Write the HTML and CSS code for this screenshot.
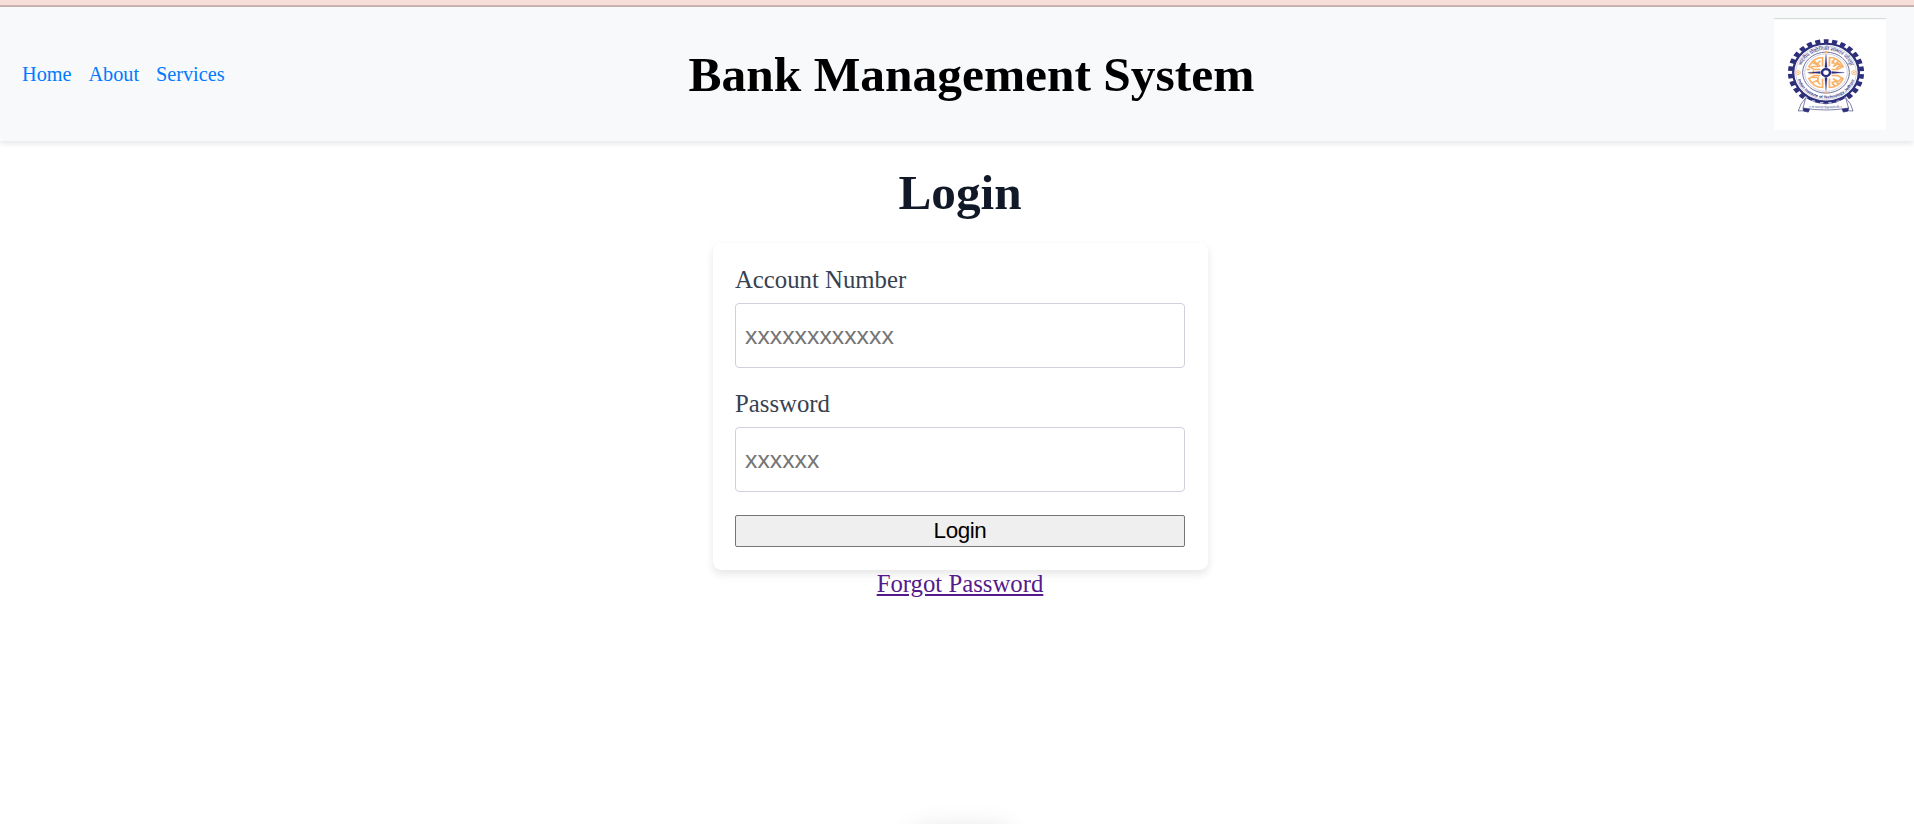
FILE: index.html
```html
<!DOCTYPE html>
<html lang="en">
<head>
<meta charset="utf-8">
<title>Bank Management System</title>
<link rel="stylesheet" href="styles.css">
</head>
<body>
<div class="top-strip"></div>
<header class="header">
  <nav class="nav"><a href="#">Home</a><a href="#">About</a><a href="#">Services</a></nav>
  <h1 class="title">Bank Management System</h1>
  <svg class="logo" viewBox="0 0 112 112" aria-label="Institute emblem">
    <rect width="112" height="112" fill="#fff"/>
    <rect width="112" height="1.2" fill="#d8dadc"/>
    <g transform="translate(52 54.6) scale(1.14 1)">
      <circle r="31.3" fill="none" stroke="#2d2f7b" stroke-width="4.2" stroke-dasharray="4.5 3.064" stroke-dashoffset="2.25" transform="rotate(-90)"/>
      <circle r="28.8" fill="#fff" stroke="#2d2f7b" stroke-width="2"/>
      <circle r="26.6" fill="none" stroke="#a9aacb" stroke-width=".5"/>
      <circle r="20.5" fill="none" stroke="#55578f" stroke-width=".8"/>
      <circle r="18.7" fill="none" stroke="#b5b6d2" stroke-width=".6"/>
      <g fill="none" stroke="#f9b269" stroke-width="1.5">
        <path d="M3 -6V-15Q11 -15 15 -6L10 -3L5 -3M5 -12L8 -8L11 -12M6 -6L11 -9L14 -5M8 -14L5 -9M9 -4L12 -7"/>
        <path d="M-3 -6V-15Q-11 -15 -15 -6L-10 -3H-5M-5 -12L-8 -8L-12 -10M-13 -6H-7V-10M-11 -12L-5 -6M-14 -3H-17"/>
        <path d="M3 6V15Q11 15 15 6L10 3H5M5 12L8 8L11 12M6 6L11 9L14 5M8 14L5 9"/>
        <path d="M-3 6V15Q-11 15 -15 6L-10 3H-5M-5 12L-8 8L-12 10M-13 5H-7V10M-15 1H-11V-2"/>
      </g>
      <path d="M-1 -5L0 -18L1 -5ZM-1 5L0 18L1 5ZM-5 -1L-16 0L-5 1ZM5 -1L16 0L5 1Z" fill="#2d2f7b" stroke="#2d2f7b" stroke-width=".3"/>
      <circle r="3.5" fill="#fff" stroke="#2d2f7b" stroke-width="2.2"/>
      <g fill="#fff" stroke="#f9b269" stroke-width=".8"><circle cx="-24.5" r="2"/><circle cx="24.5" r="2"/></g>
      <g fill="#f9b269"><circle cx="-24.5" r=".8"/><circle cx="24.5" r=".8"/><circle cy="-20.3" r="1.2"/><circle cy="20" r="1.2"/></g>
      <path id="upper" d="M-22.3 0A22.3 22.3 0 0 1 22.3 0" fill="none"/>
      <path id="lower" d="M-25.7 0A25.7 25.7 0 0 0 25.7 0" fill="none"/>
      <text class="seal-hi"><textPath href="#upper" startOffset="50%" text-anchor="middle" textLength="56">भारतीय प्रौद्योगिकी संस्थान जोधपुर</textPath></text>
      <text class="seal-en"><textPath href="#lower" startOffset="50%" text-anchor="middle" textLength="66">Indian Institute of Technology Jodhpur</textPath></text>
    </g>
    <g stroke="#2d2f7b" stroke-width=".6" stroke-linejoin="round">
      <path d="M31.7 80L27 86L24.3 93Q29 92 34.3 94L36 90M71.7 80L76.5 86L79 93Q74 92 69.5 94L67.5 90" fill="#fff"/>
      <path d="M29 90L36 89L34.3 94L29.5 93ZM74.5 90L67.5 89L69.5 94L74 93Z" fill="#2d2f7b"/>
      <path d="M31.7 79.7Q52 92 71.7 79.7L74.5 90Q52 94 29 90Z" fill="#fff"/>
    </g>
    <path id="motto" d="M35 89.5Q52 91.5 69 89.5" fill="none"/>
    <text class="seal-motto"><textPath href="#motto" textLength="33">॥ त्वं ज्ञानमयो विज्ञानमयोऽसि ॥</textPath></text>
  </svg>
</header>
<main class="main">
  <h2 class="heading">Login</h2>
  <form class="card">
    <label class="label" for="account">Account Number</label>
    <input class="input" id="account" type="text" placeholder="xxxxxxxxxxxx">
    <label class="label" for="password">Password</label>
    <input class="input" id="password" type="password" placeholder="xxxxxx">
    <button class="button" type="button">Login</button>
  </form>
  <a class="forgot" href="#">Forgot Password</a>
</main>
<div class="bottom-shade"></div>
</body>
</html>
```

FILE: styles.css
```css
* { box-sizing: border-box; }
body {
  margin: 0;
  height: 824px;
  overflow: hidden;
  position: relative;
  background: #fff;
  font-family: "Liberation Serif", "Times New Roman", serif;
}
.top-strip {
  height: 7px;
  background: #f5dfd8;
  border-bottom: 2px solid #c9b3ac;
}
.header {
  display: grid;
  grid-template-columns: 1fr auto 1fr;
  align-items: center;
  height: 134px;
  padding: 0 28px 0 22px;
  background: #f8f9fb;
  box-shadow: 0 2.8px 5.6px rgba(0, 0, 0, .1);
}
.nav { display: flex; gap: 16.8px; font-size: 20.3px; }
.nav a { color: #007bff; text-decoration: none; }
.title { margin: 2px 0 0 35px; font-size: 49.45px; line-height: 56px; color: #000; }
.logo { display: block; width: 112px; height: 112px; justify-self: end; }
.seal-hi { font: 5px "Noto Sans", sans-serif; fill: #2d2f7b; }
.seal-en { font: 700 3.7px "Liberation Sans", sans-serif; fill: #2d2f7b; }
.seal-motto { font: 2.8px "Noto Sans", sans-serif; fill: #2d2f7b; }
.main {
  display: flex;
  flex-direction: column;
  align-items: center;
  padding: 24px 0 0 6px;
}
.heading { margin: 0; font-size: 49.28px; line-height: 56px; color: #111827; }
.card {
  display: flex;
  flex-direction: column;
  width: 495px;
  height: 327px;
  margin-top: 22px;
  padding: 23px 22.5px 22px;
  background: #fff;
  border-radius: 8.4px;
  box-shadow: 0 4px 8.4px -.5px rgba(0, 0, 0, .1);
}
.label { font-size: 24.75px; line-height: 28px; height: 37px; color: #374151; }
.input {
  width: 100%;
  height: 65px;
  margin: 0 0 22px;
  padding: 0 9px;
  border: 1px solid #d1d1db;
  border-radius: 4px;
  background: #fff;
  font: 24.8px "Liberation Sans", Arial, sans-serif;
}
.input::placeholder { color: #757575; }
.button {
  height: 32px;
  flex: none;
  margin-top: 1px;
  padding: 0;
  border: 1px solid #767676;
  border-radius: 2px;
  background: #efefef;
  color: #000;
  font: 22.4px "Liberation Sans", Arial, sans-serif;
  letter-spacing: -.4px;
}
.forgot { font-size: 24.75px; line-height: 28px; color: #551a8b; }
.bottom-shade {
  position: absolute;
  left: 914px;
  top: 832px;
  width: 96px;
  height: 30px;
  border-radius: 12px;
  box-shadow: 0 0 28px 2px rgba(0, 0, 0, .13);
}
```
